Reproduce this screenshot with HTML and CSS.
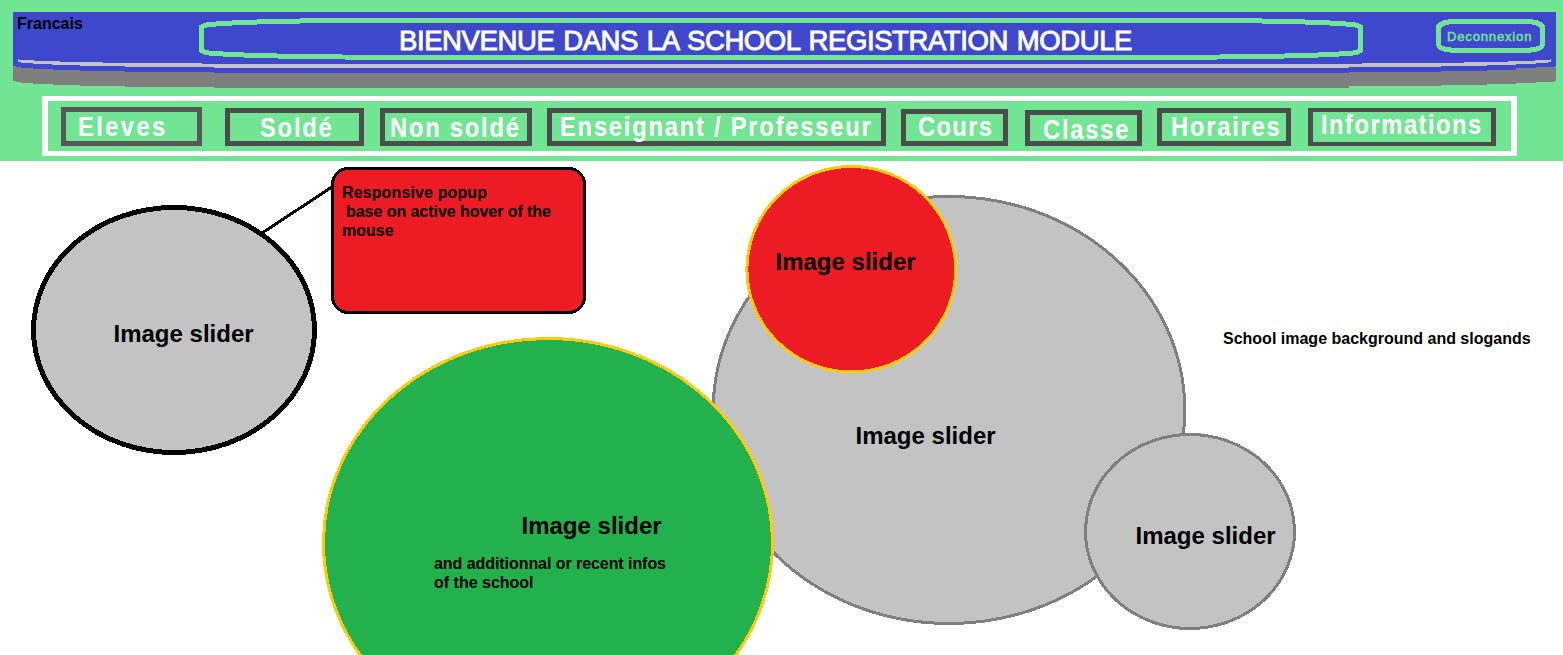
FILE: index.html
```html
<!DOCTYPE html>
<html lang="fr">
<head>
<meta charset="utf-8">
<title>School Registration Module</title>
<link rel="stylesheet" href="styles.css">
</head>
<body>
<header class="header">
  <div class="banner">
    <svg class="banner-art" viewBox="13 12 1543 76" width="1543" height="76" aria-hidden="true">
      <path class="shadow" d="M13 60H1556V81H1554V82H1536V83H1516V84H1487V85H1441V86H1349V87V88H214V87H125V86H80V85H53V84H33V83H21V82H16V81H13Z"/>
      <path class="panel" d="M13 12H1556V66H1554V67H1536V68H1516V70H1487V71H1441V72H1349V73H214V72H125V71H80V70H53V69H33V68H21V67H16V66H13Z"/>
      <path class="shine" d="M18 59H19V60H34V61H60V62H103V63H202V64H1362V63H1464V62H1508V61H1535V60H1550V59H1551V62H1548V63H1536V64H1516V65H1487V66H1441V67H1349V68H214V67H125V66H80V65H52V64H33V63H21V62H18Z"/>
      <path class="frame" d="M201.5 50.5V27L206 25L219 23.7L238 22.7L265 21.7L316 20.7L400 20.5H1162L1246 20.7L1297 21.7L1324 22.7L1343 23.7L1356 25L1360.500 27V50.500L1356 52.800L1339 54L1318 55L1285 56L1220 57L1120 57.500H442L342 57L277 56L244 55L223 54L206 52.800Z"/>
      <path class="frame" d="M1438.500 45V27L1441 24.500L1445 22.500L1452 21.500H1529L1536 22.500L1540 24.500L1542.500 27V45L1540 48L1535 49.500L1526 50.500H1455L1446 49.500L1441 48Z"/>
    </svg>
    <a class="lang">Francais</a>
    <h1 class="title">BIENVENUE DANS LA SCHOOL REGISTRATION MODULE</h1>
    <a class="logout">Deconnexion</a>
  </div>
  <nav class="nav">
    <a class="item eleves"><span>Eleves</span></a>
    <a class="item solde"><span>Soldé</span></a>
    <a class="item non-solde"><span>Non soldé</span></a>
    <a class="item enseignant"><span>Enseignant / Professeur</span></a>
    <a class="item cours"><span>Cours</span></a>
    <a class="item classe"><span>Classe</span></a>
    <a class="item horaires"><span>Horaires</span></a>
    <a class="item informations"><span>Informations</span></a>
  </nav>
</header>
<main class="stage">
  <svg class="canvas" viewBox="0 161 1563 494" width="1563" height="494">
    <g class="shapes">
      <ellipse class="grey" cx="949" cy="410" rx="235.800" ry="213.500"/>
      <ellipse class="grey" cx="1190" cy="531.500" rx="104.500" ry="97"/>
      <ellipse class="red" cx="851.300" cy="269.200" rx="104.400" ry="102.700"/>
      <ellipse class="green" cx="548" cy="543" rx="224.500" ry="204.500"/>
      <path class="pointer" d="M262 233L332 187"/>
      <ellipse class="black" cx="174" cy="330" rx="140.500" ry="122.500"/>
      <rect class="popup" x="332.500" y="168.500" width="252" height="144" rx="16"/>
    </g>
    <g class="big">
      <text x="113.500" y="342">Image slider</text>
      <text x="775.500" y="270">Image slider</text>
      <text x="855.500" y="444">Image slider</text>
      <text x="1135.500" y="544">Image slider</text>
      <text x="521.500" y="534">Image slider</text>
    </g>
    <g class="small">
      <text x="342" y="198" textLength="145">Responsive popup</text>
      <text x="346" y="217" textLength="205">base on active hover of the</text>
      <text x="342" y="236">mouse</text>
      <text x="434" y="569" textLength="232">and additionnal or recent infos</text>
      <text x="434" y="588">of the school</text>
      <text x="1223" y="344">School image background and slogands</text>
    </g>
  </svg>
</main>
</body>
</html>
```
FILE: styles.css
```css
body {
  margin: 0;
  background: #fff;
  font-family: "Liberation Sans", Arial, sans-serif;
  overflow: hidden;
}

.header {
  box-sizing: border-box;
  height: 161px;
  padding: 12px 7px 5px 13px;
  background: #71e593;
}

.banner {
  position: relative;
  display: grid;
  grid-template-columns: 186px 1164px 73px 109px;
  height: 84px;
}

.banner-art {
  position: absolute;
  top: 0;
  left: 0;
  shape-rendering: crispEdges;
}

.shadow { fill: #7f7f7f; }
.panel { fill: #3f48cc; }
.shine { fill: #c3c3c3; }
.frame { fill: none; stroke: #71e593; stroke-width: 5; }

.lang,
.title,
.logout {
  position: relative;
  white-space: nowrap;
}

.lang {
  padding: 2px 0 0 4px;
  font-size: 16px;
  font-weight: bold;
  line-height: 19px;
  color: #000;
}

.title {
  margin: 0;
  padding: 13px 0 0 200px;
  font-size: 27.5px;
  font-weight: normal;
  line-height: 32px;
  letter-spacing: -0.4px;
  word-spacing: 1.6px;
  color: #fff;
  -webkit-text-stroke: 0.9px #fff;
}

.logout {
  grid-column: 4;
  padding: 17px 0 0 11px;
  font-size: 13px;
  font-weight: normal;
  -webkit-text-stroke: 0.5px #71e593;
  line-height: 16px;
  letter-spacing: 0.85px;
  color: #71e593;
}

.nav {
  box-sizing: border-box;
  display: flex;
  align-items: flex-end;
  width: 1475px;
  height: 60px;
  margin-left: 29px;
  padding: 0 0 5px 13px;
  border: solid #fff;
  border-width: 5px 6px;
}

.item {
  box-sizing: border-box;
  flex: none;
  height: 38px;
  border: 5px solid #4c4c4c;
  color: #fff;
  font-size: 27px;
  font-weight: bold;
  line-height: 30px;
  letter-spacing: 2px;
  white-space: nowrap;
}

.item span {
  display: block;
  transform: scaleX(0.88);
  transform-origin: left;
}

.eleves { width: 141px; height: 39px; margin-right: 23px; padding-left: 12px; border-color: #575757; letter-spacing: 2.7px; }
.solde { width: 139px; margin-right: 16px; padding-left: 30px; }
.non-solde { width: 152px; margin-right: 15px; padding-left: 5px; }
.enseignant { width: 339px; margin-right: 15px; padding-left: 8px; }
.cours { width: 107px; height: 37px; margin-right: 17px; padding-left: 12px; letter-spacing: 1.5px; }
.classe { width: 117px; height: 36px; margin-right: 15px; padding-left: 13px; }
.horaires { width: 134px; margin-right: 17px; padding-left: 9px; }
.informations { width: 188px; padding-left: 8px; border-width: 4px 5px; letter-spacing: 1.7px; }

.horaires span,
.enseignant span { margin-top: -1px; }
.cours span,
.informations span { margin-top: -2px; }

.canvas { display: block; }
.shapes { shape-rendering: crispEdges; stroke-width: 3; }
.grey { fill: #c3c3c3; stroke: #7f7f7f; }
.red { fill: #ed1c24; stroke: #ffc90e; }
.green { fill: #22b14c; stroke: #ffc90e; }
.black { fill: #c3c3c3; stroke: #000; stroke-width: 5; }
.popup { fill: #ed1c24; stroke: #000; }
.pointer { stroke: #000; }

.big { font-size: 24px; font-weight: bold; }
.small { font-size: 16px; font-weight: bold; }
```
